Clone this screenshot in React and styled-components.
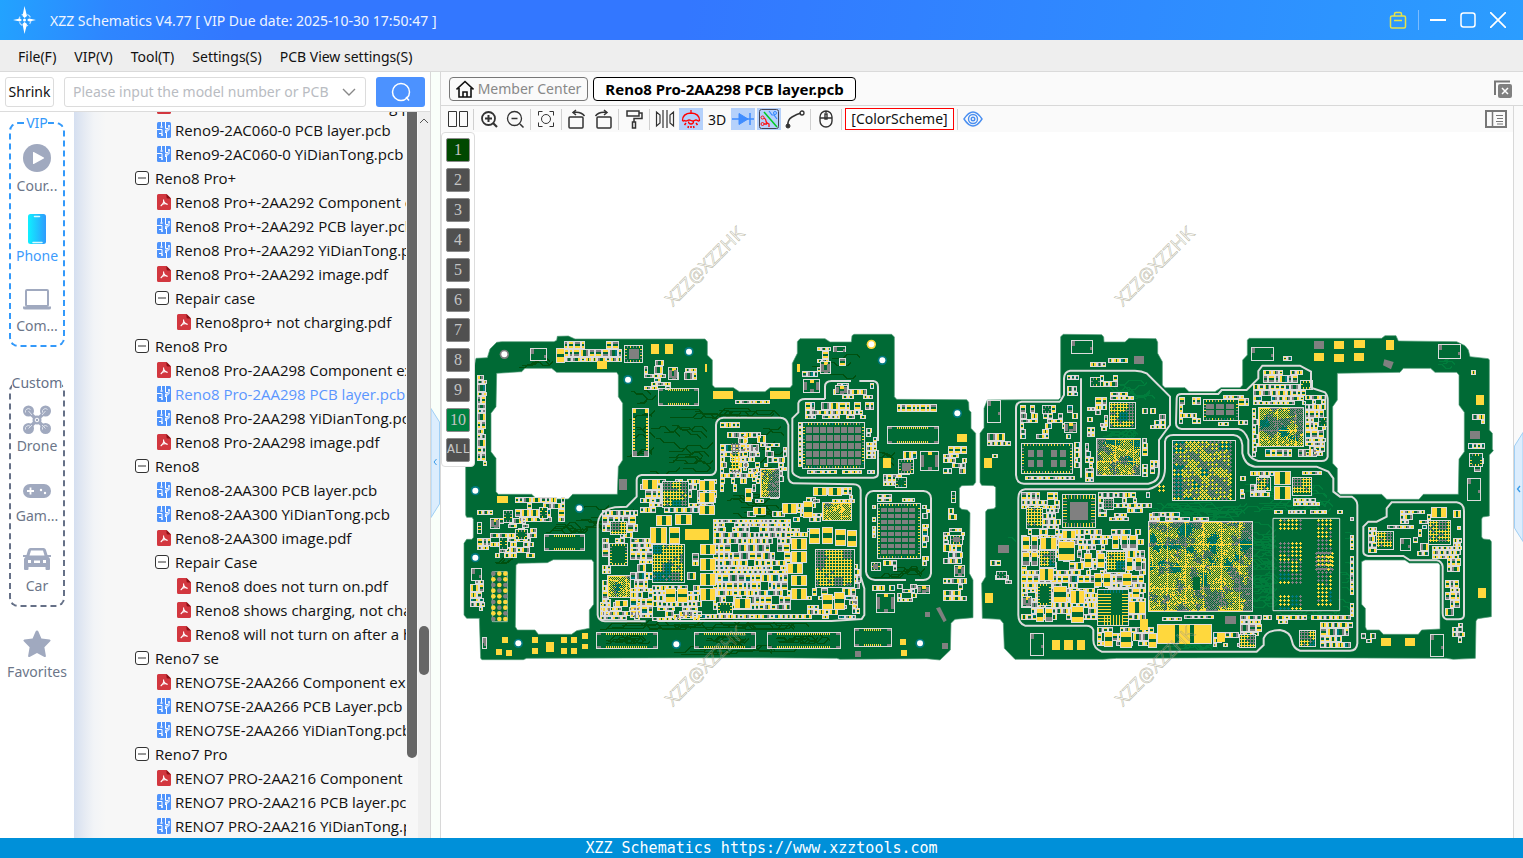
import React from 'react';
import styled, { createGlobalStyle } from 'styled-components';

const GlobalStyle = createGlobalStyle`
  * {
    box-sizing: border-box;
  }
  html, body, #root {
    height: 100%;
    margin: 0;
  }
  body {
    overflow: hidden;
    font-family: 'Noto Sans', 'Open Sans', 'Liberation Sans', sans-serif;
    font-size: 14px;
    color: #111;
  }
  button, input {
    font: inherit;
    color: inherit;
  }
`;

const AppWindow = styled.div`
  display: flex;
  flex-direction: column;
  height: 100vh;
  background: #fff;
`;

/* ---------- title bar and menu ---------- */

const TitleBar = styled.header`
  display: flex;
  align-items: center;
  height: 40px;
  flex: none;
  padding: 0 10px 0 12px;
  color: #eef4ff;
  background: linear-gradient(100deg, #22a3ff 0, #2e86ff 110px, #3377ff 240px, #3377ff 45%, #2f8bff 75%, #2b9dff 100%);
`;

const AppTitle = styled.h1`
  flex: 1;
  margin: 0 0 0 12px;
  font-size: 14px;
  font-weight: 400;
`;

const WindowButton = styled.button`
  display: grid;
  place-items: center;
  width: 30px;
  height: 30px;
  padding: 0;
  border: 0;
  background: none;
`;

const TitleDivider = styled.span`
  width: 1px;
  height: 20px;
  margin: 0 4px 0 5px;
  background: #7cbcff;
`;

const MenuBar = styled.nav`
  display: flex;
  align-items: center;
  flex: none;
  gap: 18px;
  height: 32px;
  padding: 2px 18px 0;
  background: #eee;
  border-bottom: 1px solid #dadada;
`;

const MenuButton = styled.button`
  padding: 0;
  border: 0;
  background: none;
  white-space: nowrap;
`;

/* ---------- left panel ---------- */

const Main = styled.main`
  display: flex;
  flex: 1;
  min-height: 0;
`;

const LeftPanel = styled.section`
  display: flex;
  flex-direction: column;
  flex: 0 0 431px;
  min-width: 0;
  border-right: 1px solid #d8d8d8;
`;

const SearchRow = styled.form`
  display: flex;
  align-items: center;
  flex: none;
  gap: 10px;
  height: 40px;
  padding: 0 5px;
  border-bottom: 1px solid #dcdcdc;
`;

const ShrinkButton = styled.button`
  width: 49px;
  height: 30px;
  padding: 0;
  border: 1px solid #dcdcdc;
  border-radius: 3px;
  background: #fff;
`;

const SearchBox = styled.label`
  display: flex;
  align-items: center;
  flex: 1;
  height: 30px;
  padding: 0 9px 0 8px;
  border: 1px solid #dcdcdc;
  border-radius: 3px;
  min-width: 0;
`;

const SearchInput = styled.input`
  flex: 1;
  min-width: 0;
  margin-right: 6px;
  padding: 0;
  border: 0;
  outline: 0;
  background: none;
  &::placeholder {
    color: #b9bcc2;
    opacity: 1;
  }
`;

const SearchButton = styled.button`
  display: grid;
  place-items: center;
  width: 49px;
  height: 30px;
  border: 0;
  border-radius: 3px;
  background: #4c92ff;
`;

const Browser = styled.div`
  display: flex;
  flex: 1;
  min-height: 0;
`;

const SideNav = styled.nav`
  flex: 0 0 74px;
  overflow: hidden;
`;

const NavGroup = styled.fieldset`
  min-width: 0;
  width: 56px;
  margin: 0 9px ${(props) => props.$gap}px;
  padding: 0 0 1px;
  border: 2px dashed ${(props) => props.$color};
  border-radius: 9px;
  legend {
    margin: 0 auto;
    padding: 0;
    line-height: 22px;
    color: ${(props) => props.$color};
  }
`;

const NavButton = styled.button`
  display: flex;
  flex-direction: column;
  align-items: center;
  gap: 4px;
  width: 100%;
  height: 70px;
  padding: 10px 0 0;
  border: 0;
  background: none;
  line-height: 20px;
  white-space: nowrap;
  color: ${(props) => (props.$active ? '#3d9bfc' : '#6c7689')};
`;

const Tree = styled.ul`
  flex: 1;
  min-width: 0;
  margin: 0;
  padding: 0 1px 0 61px;
  overflow: hidden;
  list-style: none;
  font-family: 'Open Sans', 'Noto Sans', sans-serif;
  font-size: 15px;
  background: linear-gradient(90deg, #d5dff0 0, #e6ebf3 11px, #f2f4f7 20px, #f7f7f7 32px);
  li:first-child {
    margin-top: -18px;
  }
`;

const TreeRow = styled.li`
  display: flex;
  align-items: center;
  gap: ${(props) => (props.$folder ? 6 : 4)}px;
  height: 24px;
  padding-left: ${(props) => props.$indent}px;
  white-space: nowrap;
  overflow: hidden;
  color: ${(props) => (props.$active ? '#5b96ff' : '#111')};
  svg {
    flex: none;
  }
`;

const ThumbTrack = styled.div`
  flex: 0 0 11px;
  background: #f7f7f7;
  div {
    width: 10px;
    height: 89%;
    border-radius: 0 0 5px 5px;
    background: #666;
  }
`;

const ScrollTrack = styled.div`
  flex: 0 0 12px;
  display: flex;
  flex-direction: column;
  align-items: center;
  background: #efefef;
  svg {
    flex: none;
    margin-top: 5px;
  }
  div {
    width: 10px;
    height: 49px;
    margin-top: auto;
    margin-bottom: 163px;
    border-radius: 5px;
    background: #666;
  }
`;

const Gutter = styled.div`
  display: flex;
  align-items: center;
  flex: none;
  width: 10px;
  background: ${(props) => props.$tint};
  border-${(props) => props.$side}: 1px solid #d8d8d8;
  button {
    display: block;
    width: 9px;
    height: 110px;
    margin-top: ${(props) => props.$shift}px;
    padding: 0;
    border: 0;
    background: none;
  }
  svg {
    display: block;
  }
`;

/* ---------- right panel ---------- */

const Workspace = styled.section`
  display: flex;
  flex-direction: column;
  flex: 1;
  min-width: 0;
`;

const TabRow = styled.div`
  display: flex;
  align-items: center;
  flex: none;
  gap: 5px;
  height: 34px;
  padding: 0 9px 0 8px;
  background: #fafafa;
  border-bottom: 1px solid #d8d8d8;
`;

const Tab = styled.button`
  display: flex;
  align-items: center;
  justify-content: center;
  gap: 4px;
  width: ${(props) => (props.$active ? 263 : 139)}px;
  height: 24px;
  padding: 0;
  border: 1px solid ${(props) => (props.$active ? '#000' : '#777')};
  border-radius: 4px;
  background: ${(props) => (props.$active ? '#fff' : '#fafafa')};
  color: ${(props) => (props.$active ? '#000' : '#888')};
  font-size: ${(props) => (props.$active ? 15 : 14)}px;
  font-weight: ${(props) => (props.$active ? 700 : 400)};
  line-height: 20px;
  white-space: nowrap;
`;

const CloseAll = styled.button`
  margin-left: auto;
  padding: 0;
  border: 0;
  background: none;
  line-height: 0;
`;

const ViewRow = styled.div`
  display: flex;
  flex: 1;
  min-height: 0;
`;

const ViewColumn = styled.div`
  display: flex;
  flex-direction: column;
  flex: 1;
  min-width: 0;
`;

const ToolBar = styled.div`
  display: flex;
  align-items: center;
  flex: none;
  height: 26px;
  padding: 0 6px 0 4px;
  background: #fafafa;
`;

const ToolButton = styled.button`
  display: grid;
  place-items: center;
  width: 24px;
  height: 22px;
  margin: 0 1px;
  padding: 0;
  border: 0;
  background: ${(props) => (props.$on ? '#b5d1fb' : 'none')};
`;

const ToolDivider = styled.span`
  width: 1px;
  height: 21px;
  margin: 0 2px;
  background: #d0d0d0;
`;

const SchemeButton = styled.button`
  width: 109px;
  height: 22px;
  margin: 0 1px;
  padding: 0;
  border: 1px solid #f00;
  background: #fff;
  line-height: 20px;
`;

const RightTool = styled.span`
  margin-left: auto;
  line-height: 0;
`;

const Canvas = styled.div`
  position: relative;
  flex: 1;
  min-height: 0;
  background: #fff;
`;

const BoardSvg = styled.svg`
  display: block;
  width: 100%;
  height: 100%;
  text {
    font-family: 'Open Sans', sans-serif;
    font-size: 18px;
  }
`;

const LayerPanel = styled.div`
  position: absolute;
  top: 0;
  left: 0;
  display: flex;
  flex-direction: column;
  gap: 6px;
  padding: 5px 4px 4px;
  border: 1px solid #ddd;
  border-radius: 4px;
  background: #fff;
`;

const LayerButton = styled.button`
  width: 24px;
  height: 24px;
  padding: 0;
  border: 1px solid #8a8a8a;
  border-radius: 2px;
  background: ${(props) => props.$fill};
  color: #c4c4c4;
  font-family: ${(props) => (props.$wide ? "'Liberation Mono', monospace" : "'Liberation Serif', serif")};
  font-size: ${(props) => (props.$wide ? 13 : 16)}px;
  line-height: 20px;
  text-align: center;
`;

const Footer = styled.footer`
  flex: none;
  height: 20px;
  background: #0090d9;
  color: #fff;
  font-family: 'DejaVu Sans Mono', monospace;
  font-size: 15px;
  line-height: 20px;
  text-align: center;
`;

/* ---------- icons ---------- */

const LogoIcon = () => (
  <svg width="26" height="30" viewBox="0 0 26 30">
    <circle cx="13" cy="15" r="6" fill="none" stroke="#bfe0ff" strokeWidth="1.2" strokeDasharray="4 2" />
    <path d="M12.500 1 15 11l-2.500 2-2-2zM12.500 29l-2-10 2-2 2.500 2zM1 15l7-1.500 2 1.500-2 1.500zM24 15l-7-1.500-2 1.500 2 1.500z" fill="#fff" />
    <circle cx="12.500" cy="15" r="1.500" fill="#fff" />
  </svg>
);

const FileIcon = ({ pdf }) =>
  pdf ? (
    <svg width="14" height="16" viewBox="0 0 14 16">
      <path d="M1.500 0H9.500L14 4.500V14.500A1.500 1.500 0 0 1 12.500 16H1.500A1.500 1.500 0 0 1 0 14.500V1.500A1.500 1.500 0 0 1 1.500 0Z" fill="#d2373f" />
      <path d="M9.500 0 14 4.500H11A1.500 1.500 0 0 1 9.500 3Z" fill="#8d1117" />
      <path d="M6.500 5.500c.8 2-.6 5-2.800 6.500M6.800 7.500c.8 1.800 2.200 2.800 4 2.800M4.500 10.800c1.500-1 3.500-1.200 5.500-.8" fill="none" stroke="#fff" strokeWidth="1.100" />
    </svg>
  ) : (
    <svg width="14" height="16" viewBox="0 0 14 16">
      <rect width="14" height="16" rx="1.500" fill="#4f93fb" />
      <path d="M4.500 0v4.500M8.500 0v6.500h2.500M0 7.500h5v5M9.500 16v-6.500M2 11.500h3M12 5v3H8.500v3" fill="none" stroke="#fff" />
      <path d="M3.500 4h2v2h-2zM11 3h2v2h-2zM4 12h2v2H4zM8.500 8h2v2h-2z" fill="#dbe9ff" />
    </svg>
  );

const FoldIcon = () => (
  <svg width="14" height="14" viewBox="0 0 14 14" fill="none" stroke="#333">
    <rect x=".5" y=".5" width="13" height="13" rx="2.500" fill="#fff" />
    <path d="M3 7h8" />
  </svg>
);

const navIcons = {
  course: (
    <>
      <circle cx="14" cy="14" r="14" fill="#a0a9bf" />
      <path d="M10 8.500v11q0 .8.800.4l10-5.300q.8-.6 0-1.200l-10-5.300q-.8-.4-.8.400z" fill="#fff" />
    </>
  ),
  phone: (
    <>
      <defs>
        <linearGradient id="phoneFill">
          <stop offset="0" stopColor="#0ff0ff" />
          <stop offset="1" stopColor="#2f9bfd" />
        </linearGradient>
      </defs>
      <rect x="5" width="18" height="30" rx="2.500" fill="url(#phoneFill)" />
      <path d="M11.500 2.500h5M10 28.500h9" stroke="#d8fbff" strokeWidth="1.500" strokeLinecap="round" />
    </>
  ),
  computer: (
    <>
      <rect x="3" y="6" width="22" height="16" rx="1" fill="none" stroke="#a0a9bf" strokeWidth="2" />
      <path d="M0 22.500h28V24q0 1.500-2 1.500H2q-2 0-2-1.500z" fill="#a0a9bf" />
    </>
  ),
  drone: (
    <>
      <path d="M5 7 23 25M23 7 5 25" stroke="#a0a9bf" strokeWidth="3.500" />
      <circle cx="5.500" cy="7" r="5.500" fill="#a0a9bf" />
      <circle cx="22.500" cy="7" r="5.500" fill="#a0a9bf" />
      <circle cx="5.500" cy="24.500" r="5.500" fill="#a0a9bf" />
      <circle cx="22.500" cy="24.500" r="5.500" fill="#a0a9bf" />
      <circle cx="14" cy="16" r="4.500" fill="#a0a9bf" />
      <circle cx="14" cy="16" r="1.800" fill="none" stroke="#fff" />
      <g fill="none" stroke="#dfe3ec">
        <path d="M2.500 8.500a3 3 0 0 1 5-3M19.500 8.500a3 3 0 0 1 5-3M2.500 25.500a3 3 0 0 1 5-3M19.500 25.500a3 3 0 0 1 5-3" />
        <path d="M5.500 7 9 11M22.500 7 19 11M5.500 24.500 9 21M22.500 24.500 19 21" />
      </g>
    </>
  ),
  game: (
    <>
      <rect y="10" width="28" height="14" rx="7" fill="#a0a9bf" />
      <path d="M7.500 13.500v7M4 17h7" stroke="#fff" strokeWidth="1.800" />
      <circle cx="18" cy="16" r="1.200" fill="#fff" />
      <circle cx="22" cy="19" r="1.200" fill="#fff" />
    </>
  ),
  car: (
    <path
      transform="translate(0 1)"
      fillRule="evenodd"
      fill="#a0a9bf"
      d="M7.500 3h13q1.800 0 2.400 1.700L24.500 10H28v2h-2.500q1.500.8 1.500 2.500V24q0 1-1 1h-2.500q-1 0-1-1v-2h-17v2q0 1-1 1H2q-1 0-1-1v-9.500Q1 12.800 2.500 12H0v-2h3.500l1.600-5.300Q5.700 3 7.500 3zM8 5.500l-1.500 5h15L20 5.500zM5 15v3h3v-3zM20 15v3h3v-3zM11 15.500v2.500h6v-2.500z"
    />
  ),
  star: (
    <path
      d="M14 .5q1 0 1.400 1l3 7 8.200 1q1.800.4.600 1.800l-5.800 6 1.500 8.600q.1 1.600-1.500 1L14 23l-7.400 3.900q-1.600.6-1.500-1l1.500-8.600-5.800-6q-1.200-1.400.6-1.800l8.200-1 3-7Q13 .5 14 .5z"
      fill="#a0a9bf"
    />
  ),
};

const NavIcon = ({ name }) => (
  <svg width="28" height="28" viewBox="0 0 28 28" overflow="visible">
    {navIcons[name]}
  </svg>
);

// every tool glyph is drawn in a 20 x 20 box
const toolIcons = {
  split: <path d="M.5 2.500h8v15h-8zM11.500 2.500h8v15h-8z" />,
  zoomIn: (
    <>
      <circle cx="9.500" cy="9.500" r="6.500" strokeWidth="1.800" />
      <path d="M6 9.500h7M9.500 6v7" strokeWidth="2" />
      <path d="m14 14 4 4" strokeWidth="2.200" />
    </>
  ),
  zoomOut: (
    <>
      <circle cx="9.500" cy="9.500" r="7" strokeWidth="1.300" />
      <path d="M6.500 9.500h6M15 15l3.500 3.500" strokeWidth="1.500" />
    </>
  ),
  fit: (
    <>
      <circle cx="10" cy="10" r="4.500" />
      <path d="M2.500 6.500v-4h4M13.500 2.500h4v4M17.500 13.500v4h-4M6.500 17.500h-4v-4" />
    </>
  ),
  rotateLeft: (
    <>
      <rect x="2" y="8" width="14" height="11" rx="1" strokeWidth="1.500" />
      <path d="M6 3.500q8-1.500 11.500 3.500M9 1 6 3.500l3 2.500" strokeWidth="1.500" />
    </>
  ),
  rotateRight: (
    <>
      <rect x="4" y="8" width="14" height="11" rx="1" strokeWidth="1.500" />
      <path d="M14 3.500Q6 2 2.500 7M11 1l3 2.500L11 6" strokeWidth="1.500" />
    </>
  ),
  roller: <path d="M3 2h12v5H3zM15 4h3v5.500h-8V13M8.500 13h3v6h-3z" strokeWidth="1.500" />,
  mirror: <path d="M8 1v18M12 1v18M1.500 3v14l3.500-3V6zM18.500 3v14l-3.500-3V6z" strokeWidth="1.200" />,
  lamp: (
    <g stroke="#f00" strokeWidth="1.300">
      <path d="M1.500 11.500q0-7 8.500-7.500 8.500.5 8.500 7.500-1 1-2 0-1.500-1-3 0t-3.500 0-3.500 0-3 0q-1 1-2 0zM10 4V1M7.500 12.500q0 2.500 2.500 2.500t2.500-2.500" />
      <path d="m5 14-1.500 2M15 14l1.500 2M7.500 17l-.5 2M12.500 17l.5 2M10 17v2" strokeWidth="1.500" />
    </g>
  ),
  diode: (
    <g stroke="#3f8cff" fill="#3f8cff">
      <path d="M-1 10h22M17 4v12" strokeWidth="1.500" />
      <path d="m6 4.500 9 5.500-9 5.500z" />
    </g>
  ),
  route: (
    <>
      <rect x=".5" y=".5" width="19" height="19" rx="2" stroke="#445" />
      <path d="m5 3 13 15" stroke="#0c2" strokeWidth="1.500" />
      <path d="m10 2 3 4h2l3 4" stroke="#38f" strokeWidth="1.200" />
      <circle cx="16" cy="4" r="1.500" stroke="#38f" />
      <path d="M5 9q2 1 2 3t3 3v3M5 15h3" stroke="#f11" strokeWidth="1.300" />
      <circle cx="3.500" cy="8.500" r="1.500" stroke="#f11" />
      <circle cx="3.500" cy="15" r="1.500" stroke="#f11" />
    </>
  ),
  arc: (
    <>
      <path d="M3 17q-1-6 4-9t9-4" strokeWidth="1.500" />
      <circle cx="17" cy="4" r="2" strokeWidth="1.300" />
      <circle cx="3" cy="17" r="2" fill="#333" />
    </>
  ),
  mouse: <path d="M4 8a6 6 0 0 1 12 0v4a6 6 0 0 1-12 0zM4 9h12M10 2.500v1.500M9 5h2v5H9z" strokeWidth="1.400" />,
  eye: (
    <g stroke="#4a8ff0" strokeWidth="1.400">
      <path d="M1 10q9-14 18 0-9 14-18 0z" />
      <circle cx="10" cy="10" r="4.500" />
      <circle cx="10" cy="10" r="1.800" />
    </g>
  ),
};

const ToolIcon = ({ name }) => (
  <svg width="20" height="20" viewBox="0 0 20 20" fill="none" stroke="#333" overflow="visible">
    {toolIcons[name]}
  </svg>
);

/* ---------- board drawing ---------- */

const C = {
  board: '#006a35',
  pad: '#ffd83d',
  gray: '#808080',
  silk: '#dcdcdc',
  teal: '#007a80',
};

const makeRandom = (seed) => {
  let a = seed;
  return () => {
    a = (a + 0x6d2b79f5) | 0;
    let t = Math.imul(a ^ (a >>> 15), 1 | a);
    t = (t + Math.imul(t ^ (t >>> 7), 61 | t)) ^ t;
    return ((t ^ (t >>> 14)) >>> 0) / 4294967296;
  };
};

const snap = (v) => Math.round(v / 3) * 3;
const box = (x, y, w, h) => `M${x} ${y}h${w}v${h}h${-w}z`;
const frame = (x, y, w, h) => `M${x} ${y}h${w}v${h}h${-w}zM${x + 3} ${y + 3}v${h - 6}h${w - 6}v${6 - h}z`;
const emptyLayer = () => ({ board: '', pad: '', gray: '', silk: '', teal: '' });

// collects the path data of one board: traces, then small parts, then everything that covers them
const buildLayers = ({ seed, fields, coils, grids, dense, matrix, connectors, chips, traces }) => {
  const rnd = makeRandom(seed);
  const parts = emptyLayer();
  const covers = emptyLayer();
  const cells = [];
  let trace = '';
  let out = parts;
  const tone = () => {
    const r = rnd();
    if (r < 0.62) return 'pad';
    return r < 0.96 ? 'gray' : 'teal';
  };

  traces.forEach(([x, y, w, h, n]) => {
    for (let i = 0; i < n; i += 1) {
      let px = snap(x + rnd() * w * 0.6);
      let py = snap(y + rnd() * h);
      trace += `M${px} ${py + 1.5}`;
      for (let k = 0; k < 3; k += 1) {
        const d = snap(6 + rnd() * 12);
        const run = snap(9 + (rnd() * w) / 6);
        const down = py + d < y + h && (rnd() < 0.5 || py - d < y);
        if (px + run + d > x + w) break;
        px += run + d;
        py += down ? d : -d;
        trace += `h${run}l${d} ${down ? d : -d}`;
      }
    }
  });

  fields.forEach(([x, y, w, h, density = 0.85]) => {
    let py = snap(y);
    while (py < y + h - 8) {
      const rowH = Math.min([12, 15, 18, 24][Math.floor(rnd() * 4)], Math.max(12, snap(y + h - py)));
      let px = snap(x);
      while (px < x + w - 8) {
        const pw = Math.min([12, 15, 18, 21, 27][Math.floor(rnd() * 5)], Math.max(12, snap(x + w - px)));
        if (rnd() < density) {
          out.board += box(px, py, pw, rowH);
          out.silk += frame(px, py, pw, rowH);
          if (pw >= rowH) {
            const p = pw > 18 ? 6 : 3;
            out[tone()] += box(px + 3, py + 3, p, rowH - 6);
            out[tone()] += box(px + pw - 3 - p, py + 3, p, rowH - 6);
          } else {
            const p = rowH > 18 ? 6 : 3;
            out[tone()] += box(px + 3, py + 3, pw - 6, p);
            out[tone()] += box(px + 3, py + rowH - 3 - p, pw - 6, p);
          }
        }
        px += pw;
      }
      py += rowH;
    }
  });

  out = covers;

  coils.forEach(([x0, y0, w0, h0]) => {
    const [x, y, w, h] = [x0, y0, w0, h0].map(snap);
    out.board += box(x, y, w, h);
    out.silk += frame(x, y, w, h);
    if (w >= h) {
      const p = snap((w - 6) * 0.36);
      out.pad += box(x + 3, y + 3, p, h - 6) + box(x + w - 3 - p, y + 3, p, h - 6);
    } else {
      const p = snap((h - 6) * 0.36);
      const last = w < 27 && rnd() < 0.4 ? 'gray' : 'pad';
      out.pad += box(x + 3, y + 3, w - 6, p);
      out[last] += box(x + 3, y + h - 3 - p, w - 6, p);
    }
  });

  // ball grids made of touching plus signs
  grids.forEach(([x0, y0, w0, h0, pitch = 9, edge = true, grayShare = 0.2]) => {
    const [x, y, w, h] = [x0, y0, w0, h0].map(snap);
    if (edge) {
      out.board += box(x - 3, y - 3, w + 6, h + 6);
      out.silk += frame(x - 3, y - 3, w + 6, h + 6);
    }
    const blocks = Array.from({ length: 64 }, () => {
      const r = rnd();
      if (r < grayShare) return 'gray';
      return r < grayShare + 0.1 ? 'teal' : 'pad';
    });
    for (let gy = y; gy + 9 <= y + h; gy += pitch) {
      for (let gx = x; gx + 9 <= x + w; gx += pitch) {
        const b = (Math.floor((gx - x) / 27) * 3 + Math.floor((gy - y) / 27) * 7) % 64;
        const key = rnd() < 0.12 ? 'gray' : blocks[b];
        out[key] += box(gx + 3, gy, 3, 9) + box(gx, gy + 3, 9, 3);
      }
    }
  });

  dense.forEach(([x0, y0, w0, h0]) => {
    const [x, y, w, h] = [x0, y0, w0, h0].map(snap);
    out.board += box(x - 3, y - 3, w + 6, h + 6);
    out.silk += frame(x - 3, y - 3, w + 6, h + 6);
    const seeds = Array.from({ length: Math.ceil((w * h) / 450) }, () => {
      const r = rnd();
      let key = 'pad';
      if (r < 0.27) key = 'gray';
      else if (r < 0.38) key = 'teal';
      return [rnd() * w, rnd() * h, key];
    });
    for (let gy = 0; gy < h; gy += 3) {
      for (let gx = 0; gx < w; gx += 3) {
        const lane = gx % 54 === 0 || gy % 66 === 0;
        if ((gx + gy) % 6 === 0 || lane || rnd() < 0.14) {
          let best = 1e9;
          let key = 'pad';
          const jx = gx + rnd() * 12;
          const jy = gy + rnd() * 12;
          seeds.forEach(([sx, sy, k]) => {
            const d = Math.abs(sx - jx) + Math.abs(sy - jy);
            if (d < best) {
              best = d;
              key = k;
            }
          });
          if (lane && key === 'teal') key = 'pad';
          cells.push([x + gx, y + gy, key]);
        }
      }
    }
  });

  matrix.forEach(({ x, y, w, h, cols, rows, cw, ch, px, py, dx, dy }) => {
    out.board += box(x, y, w, h);
    out.silk += frame(x, y, w, h);
    for (let i = x + 9; i < x + w - 9; i += 9) {
      out[tone()] += box(i, y + 3, 3, 6);
      out[tone()] += box(i, y + h - 9, 3, 6);
    }
    for (let j = y + 15; j < y + h - 12; j += 9) {
      out[tone()] += box(x + 3, j, 6, 3);
      out[tone()] += box(x + w - 9, j, 6, 3);
    }
    for (let r = 0; r < rows; r += 1) {
      for (let c = 0; c < cols; c += 1) {
        out.gray += box(px + c * dx, py + r * dy, cw, ch);
      }
    }
  });

  connectors.forEach(([x0, y0, w0, h0]) => {
    const [x, y, w, h] = [x0, y0, w0, h0].map(snap);
    out.silk += frame(x, y, w, h);
    if (w > h) {
      out.gray += box(x + 3, y + 3, 12, 6) + box(x + w - 15, y + 3, 12, 6);
      out.gray += box(x + 3, y + h - 9, 12, 6) + box(x + w - 15, y + h - 9, 12, 6);
      for (let i = x + 30; i < x + w - 30; i += 6) {
        out.pad += box(i, y + 3, 3, 6) + box(i, y + h - 9, 3, 6);
      }
    } else {
      out.pad += box(x + 3, y + 3, 9, 12) + box(x + w - 12, y + 3, 9, 12);
      out.gray += box(x + 3, y + h - 18, 12, 15) + box(x + w - 15, y + h - 18, 12, 15);
      for (let j = y + 30; j < y + h - 24; j += 9) {
        out.pad += box(x + 3, j, 6, 6) + box(x + w - 9, j, 6, 6);
      }
    }
  });

  chips.forEach(([x0, y0, w0, h0, core]) => {
    const [x, y, w, h] = [x0, y0, w0, h0].map(snap);
    out.board += box(x, y, w, h);
    out.silk += frame(x, y, w, h);
    if (core === 'pins' || core === 'core') {
      const len = w > 90 ? 12 : 6;
      for (let i = x + 9; i < x + w - 9; i += 9) {
        out[tone()] += box(i, y + 3, 3, len) + box(i, y + h - 3 - len, 3, len);
      }
      for (let j = y + 12; j < y + h - 9; j += 9) {
        out[tone()] += box(x + 3, j, len, 3) + box(x + w - 3 - len, j, len, 3);
      }
    }
    if (core === 'core') {
      out.gray += box(x + snap(w * 0.24), y + snap(h * 0.24), snap(w * 0.54), snap(h * 0.54));
    }
    if (core === 'corners') {
      out.gray += box(x + 3, y + snap(h * 0.2), 9, snap(h * 0.6));
      out.gray += box(x + w - 12, y + snap(h * 0.2), 9, snap(h * 0.6));
      out.pad += box(x + snap(w * 0.4), y + 3, 12, 9);
      out.gray += box(x + snap(w * 0.4), y + h - 12, 12, 9);
    }
    if (core === 'tabs') {
      out.gray += box(x + 3, y + 3, 9, 15) + box(x + w - 9, y + snap(h * 0.5), 6, 9);
    }
    if (core === 'comb') {
      for (let j = y + 15; j < y + h - 12; j += 9) {
        out.pad += box(x + 3, j, 39, 3) + box(x + w - 21, j, 18, 3);
      }
      for (let i = x + 21; i < x + w - 15; i += 9) {
        out.pad += box(i, y + h - 33, 3, 30);
        out.teal += box(i, y + 3, 3, 9);
      }
    }
  });

  return { trace, parts, covers, cells };
};

const shift = (dx, list) => list.map(([x, ...rest]) => [x + dx, ...rest]);

const leftBoard = {
  id: 'leftBoard',
  outline:
    'M62 1000L58 880 20 880 12 870 12 655 20 643 36 643 40 637 40 583 36 577 20 577 17 570 17 420 27 380 27 200 48 100 82 98 90 72 110 52 125 50 282 50 290 46 292 34 325 33 345 42 735 42 742 50 742 90 757 105 757 180 765 188 820 188 838 200 915 200 930 188 990 188 997 180 997 115 1012 85 1012 50 1020 41 1095 41 1110 51 1174 51 1176 32 1182 28 1295 28 1303 36 1303 215 1310 223 1520 224 1526 232 1527 255 1533 262 1533 310 1547 325 1547 472 1540 481 1505 482 1498 490 1498 546 1505 553 1522 555 1530 563 1528 745 1539 765 1539 878 1505 881 1485 883 1473 895 1471 975 1440 1005 1400 1001 1140 1003 1130 1000 840 998 200 1000 190 1004 66 1004z',
  holes:
    'M110 145L185 140 195 130 275 130 290 142 470 142 475 150 475 215 488 235 488 405 475 425 472 508 338 508 325 522 230 522 215 508 115 508 108 500 108 400 93 380 93 265 108 245zM168 720L175 715 262 713 280 704 395 704 401 712 401 838 388 855 388 910 350 917 335 928 235 928 225 915 172 915 166 905z',
  shields:
    'M592 888H1115L1205 882 1213 870V790L1202 755V495Q1200 478 1180 478L1000 475Q985 470 985 455V300Q980 278 960 278H790Q769 280 768 300V435Q765 450 750 450H545Q530 452 530 465V515L500 545 465 547Q415 555 413 600V870Q415 888 435 889H557M1095 222V185Q1095 168 1115 168H1173M1198 168H1240Q1254 170 1254 185V348M1254 375V445Q1254 458 1240 458H1020Q998 450 997 440V280L1015 262V235Q1018 222 1035 222H1095M1338 765H1245Q1220 762 1218 740V520Q1220 500 1240 498H1390Q1412 500 1413 520V745Q1410 764 1390 765H1365',
  pads: [
    [573, 58, 24, 28], [615, 58, 24, 28], [411, 108, 30, 24], [111, 514, 33, 20], [127, 936, 17, 17], [108, 972, 17, 17],
    [138, 975, 17, 17], [216, 936, 18, 18], [216, 969, 18, 18], [258, 951, 24, 30], [303, 936, 18, 18], [303, 969, 18, 18],
    [333, 936, 18, 18], [333, 969, 18, 18], [366, 924, 18, 18], [366, 957, 18, 15], [759, 198, 60, 24], [930, 198, 60, 24],
    [676, 612, 70, 32], [1492, 328, 28, 22], [1270, 400, 22, 30], [1320, 942, 18, 18], [1323, 975, 18, 18], [736, 118, 6, 24], [1012, 118, 8, 24],
  ],
  grays: [[477, 462, 24, 32], [1395, 862, 15, 15], [1446, 953, 18, 18], [1185, 978, 18, 18]],
  vias: [[687, 80], [504, 164], [46, 497], [358, 550], [46, 698], [175, 955], [649, 958], [1267, 106], [1492, 265], [1380, 955], [133, 88, 'gray'], [1234, 58, 'pad']],
  bar: 'M1428 850l12-4 20 40-9 6z',
};

const rightBoard = {
  id: 'rightBoard',
  outline:
    'M120 1003L88 970 85 895 75 883 22 880 20 775 32 755 32 560 38 553 57 551 62 545 62 487 55 482 20 481 15 472 15 325 27 308 27 250 37 225 250 224 257 218 257 35 265 28 380 29 386 36 387 51 450 51 462 40 543 41 548 52 548 85 562 110 562 180 570 188 630 188 642 200 720 200 738 188 795 188 803 180 803 105 817 90 817 45 823 40 1220 40 1230 32 1263 32 1270 48 1445 50 1470 62 1480 75 1485 95 1540 101 1543 105 1543 315 1552 325 1552 372 1555 377 1543 390 1543 573 1523 576 1520 582 1520 636 1525 642 1545 644 1549 650 1549 875 1508 881 1503 888 1501 1000 1435 1003 1415 1000 845 998 425 1000 385 1003z',
  holes:
    'M1087 145L1275 142 1285 130 1367 130 1380 142 1445 142 1452 150 1452 240 1468 262 1468 380 1452 402 1450 508 1345 508 1332 523 1235 523 1220 508 1095 508 1087 500 1087 430 1073 415 1073 245 1087 225zM1160 710L1170 705 1290 705 1303 714 1390 714 1395 720 1395 912 1340 915 1330 928 1225 928 1213 915 1175 915 1171 905 1171 850 1160 838z',
  shields:
    'M255 230H140Q123 232 123 250V450Q125 478 150 476H520Q552 470 552 440V345L585 300V215L515 145Q500 137 480 137H285Q268 140 267 160V210L255 230M318 160V458M150 493H520Q570 480 570 430V350Q572 330 595 330H775Q800 332 802 360V385Q810 422 840 425H1025L1060 440 1075 460V500L1095 515H1130Q1147 525 1147 540V955Q1145 977 1125 977H975Q955 972 950 945 945 920 915 915 875 915 866 940V960L845 980H380Q355 970 355 945V915Q350 902 335 902H150Q130 895 130 870V520Q130 495 150 493M605 220Q605 207 620 207H730L740 195H815L850 160V138L862 122H975L1008 140V188L1050 202Q1058 210 1058 225V395Q1055 408 1040 408H850Q825 400 820 385V345Q810 315 790 312H620Q603 310 603 295ZM1250 532H1445Q1467 535 1467 560V870Q1467 883 1450 883H1415Q1403 880 1403 865V725Q1400 708 1385 706H1305L1285 693H1180Q1165 690 1165 680V605L1180 590H1205L1235 575V550z',
  pads: [
    [1077, 48, 30, 24], [1137, 46, 33, 24], [1017, 84, 30, 24], [1077, 87, 30, 24], [1137, 84, 30, 24], [1233, 45, 24, 30],
    [1503, 210, 24, 30], [1509, 789, 24, 30], [1218, 939, 30, 24], [1290, 939, 30, 24], [27, 400, 24, 30], [30, 804, 24, 30],
    [231, 945, 24, 30], [267, 945, 27, 30], [306, 945, 24, 30], [549, 900, 51, 54], [657, 900, 51, 54], [612, 900, 33, 57], [726, 924, 24, 27], [495, 882, 24, 33],
  ],
  grays: [[1017, 48, 30, 24], [1485, 318, 30, 24], [477, 93, 30, 24], [69, 660, 33, 24], [750, 873, 33, 24]],
  vias: [],
  bar: 'M1228 103l28 8-8 22-24-12z',
};

const leftLayers = buildLayers({
  seed: 41,
  traces: [
    [100, 115, 180, 12, 3], [500, 190, 90, 240, 14], [570, 300, 190, 150, 14], [600, 250, 380, 30, 8], [330, 540, 200, 80, 12],
    [410, 895, 700, 18, 14], [500, 975, 600, 12, 6], [250, 595, 150, 30, 6], [80, 710, 80, 12, 4], [780, 500, 200, 80, 10],
    [860, 290, 120, 180, 10], [1230, 720, 170, 40, 6], [1250, 360, 60, 80, 4], [1020, 70, 200, 90, 3], [430, 935, 150, 20, 8], [730, 935, 150, 20, 8], [940, 935, 180, 20, 8],
  ],
  fields: [
    [50, 150, 28, 280], [50, 108, 20, 16], [290, 48, 195, 65, 0.8], [552, 105, 80, 90, 0.6], [630, 130, 80, 40, 0.6],
    [165, 515, 150, 75, 0.6], [50, 555, 70, 20, 0.9], [90, 580, 140, 120, 0.5], [50, 640, 40, 40, 0.7], [30, 765, 42, 90, 0.7],
    [780, 290, 60, 20, 1], [780, 322, 120, 180, 0.68], [850, 330, 130, 170, 0.4], [540, 462, 230, 110, 0.75], [425, 555, 110, 100], [425, 655, 28, 225],
    [510, 640, 70, 240, 0.75], [575, 780, 150, 110, 0.8], [420, 830, 120, 55], [760, 582, 232, 280, 0.92], [860, 505, 125, 70, 0.4],
    [1000, 515, 85, 75, 0.7], [1060, 485, 130, 50, 0.6], [680, 660, 40, 110, 0.6], [1040, 790, 155, 90, 0.55], [1175, 700, 25, 180, 0.6],
    [640, 868, 420, 14, 0.95], [990, 610, 60, 30, 0.6], [1310, 238, 120, 24, 0.85], [1315, 378, 58, 70, 0.6], [1270, 448, 60, 35, 0.6],
    [1450, 362, 70, 84, 0.6], [1465, 550, 25, 40, 0.9], [1448, 610, 65, 110, 0.6], [1450, 760, 75, 72, 0.6], [1235, 780, 70, 18, 0.8],
    [1310, 778, 62, 50, 0.7], [1230, 704, 80, 45, 0.5], [1070, 65, 42, 78, 0.6], [1025, 138, 50, 20, 0.9], [1120, 175, 120, 45, 0.6], [1035, 232, 205, 50, 0.75],
    [1218, 310, 30, 135, 0.7], [1013, 290, 12, 140, 0.9], [1020, 435, 225, 12, 0.8], [1250, 508, 125, 22, 0.8], [1235, 540, 12, 130, 0.6],
    [1385, 540, 22, 185, 0.6], [825, 226, 110, 14, 0.8], [1120, 100, 80, 30, 0.5],
  ],
  coils: [
    [546, 462, 48, 34], [718, 465, 48, 33], [718, 502, 48, 33], [718, 540, 48, 30], [588, 570, 48, 32], [646, 568, 50, 32], [570, 605, 50, 50],
    [628, 605, 34, 50], [720, 658, 48, 33], [720, 698, 48, 40], [720, 744, 48, 40], [720, 790, 48, 38], [614, 790, 34, 46], [650, 790, 34, 46],
    [288, 70, 27, 45], [466, 824, 40, 22],
    ...shift(750, [
      [215, 533, 46, 34], [280, 528, 30, 50], [298, 610, 34, 48], [336, 605, 34, 50], [374, 612, 34, 50], [412, 615, 30, 50],
      [244, 640, 48, 36], [244, 678, 48, 36], [232, 714, 48, 34], [244, 750, 48, 34], [244, 788, 48, 36], [336, 808, 34, 48],
      [372, 800, 34, 54], [310, 486, 42, 26], [354, 486, 42, 26], [130, 545, 38, 25], [106, 488, 22, 42], [72, 820, 50, 32],
    ]),
  ],
  grids: [
    [610, 470, 74, 74], [453, 590, 46, 36], [580, 660, 92, 112], [812, 355, 30, 90, 9, false], [1068, 675, 113, 112, 9, true, 0.25],
  ],
  dense: [[445, 752, 66, 64], [902, 432, 54, 84], [1088, 535, 84, 50]],
  matrix: [
    { x: 1026, y: 291, w: 189, h: 141, cols: 8, rows: 5, cw: 18, ch: 18, px: 1038, py: 306, dx: 21, dy: 24 },
    { x: 1251, y: 534, w: 132, h: 168, cols: 5, rows: 8, cw: 18, ch: 12, px: 1263, py: 549, dx: 21, dy: 18 },
  ],
  connectors: [
    [595, 188, 122, 54], [253, 628, 123, 51], [408, 920, 186, 51], [703, 920, 186, 51], [922, 920, 222, 51], [1282, 302, 156, 54], [515, 250, 51, 148],
    [1183, 910, 114, 57],
  ],
  chips: [
    [492, 60, 58, 55, 'core'], [210, 68, 51, 38, 'tabs'], [448, 655, 57, 68, 'pins'], [1315, 402, 48, 45, 'core'], [1380, 378, 57, 60, 'corners'],
    [1248, 805, 58, 60, 'corners'], [1028, 163, 51, 42, 'corners'], [34, 728, 34, 38, 'tabs'], [90, 580, 30, 33, 'corners'], [118, 636, 28, 40, 'pins'],
    [130, 555, 30, 38, 'pins'], [165, 612, 40, 32, 'pins'], [236, 545, 27, 36, 'pins'], [1471, 630, 40, 30, 'core'], [1483, 720, 33, 36, 'corners'],
    [1081, 108, 34, 38, 'corners'], [1126, 180, 40, 30, 'corners'], [624, 126, 30, 38, 'corners'], [1232, 712, 30, 27, 'core'], [1305, 455, 36, 33, 'pins'],
    [50, 592, 15, 36, 'pins'], [1472, 498, 15, 36, 'pins'], [66, 935, 16, 36, 'tabs'], [772, 830, 48, 36, 'pins'], [1372, 780, 39, 28, 'corners'], [1120, 62, 39, 18, 'tabs'],
  ],
});

const rightLayers = buildLayers({
  seed: 97,
  traces: [
    [350, 165, 200, 60, 8], [520, 530, 300, 60, 24], [800, 470, 290, 90, 26], [800, 590, 110, 260, 50], [1085, 590, 50, 270, 10], [900, 860, 200, 20, 10],
    [1380, 90, 60, 40, 4], [90, 630, 40, 20, 2], [560, 960, 180, 14, 5], [380, 310, 120, 30, 8],
  ],
  fields: [
    [275, 150, 35, 60, 0.6], [337, 150, 95, 42, 0.55], [135, 240, 175, 105, 0.5], [360, 215, 36, 100, 0.7], [335, 245, 22, 90, 0.6], [500, 250, 20, 30, 0.4],
    [525, 250, 48, 80, 0.5], [525, 330, 22, 120], [405, 200, 75, 24, 0.6], [330, 340, 28, 130], [502, 340, 18, 120], [150, 452, 150, 14], [345, 110, 55, 18],
    [400, 98, 60, 16], [35, 325, 70, 80, 0.55], [45, 705, 70, 80, 0.5], [137, 502, 118, 48], [202, 550, 55, 62], [368, 502, 165, 85, 0.6], [137, 612, 375, 280, 0.8],
    [365, 905, 180, 66, 0.75], [627, 870, 120, 15, 0.9], [530, 562, 125, 24, 0.7], [560, 876, 60, 12], [655, 575, 48, 12, 0.8], [296, 350, 18, 85], [715, 922, 80, 45, 0.7],
    [612, 215, 68, 82, 0.7], [745, 210, 60, 12], [730, 290, 60, 12], [790, 220, 30, 90, 0.6],
    ...shift(795, [
      [70, 134, 118, 40, 0.8], [38, 178, 160, 68, 0.8], [35, 250, 18, 150], [60, 372, 190, 28], [195, 210, 62, 180], [0, 430, 18, 100, 0.6],
      [30, 437, 70, 80, 0.6], [70, 556, 240, 12, 0.7], [160, 520, 80, 25], [185, 438, 60, 18], [248, 470, 22, 55, 0.6], [330, 575, 12, 300, 0.7],
      [70, 870, 264, 22], [240, 890, 98, 78], [0, 870, 65, 60], [115, 885, 30, 20], [480, 555, 90, 42, 0.7], [385, 605, 25, 80], [440, 600, 80, 20],
      [520, 600, 48, 92, 0.6], [638, 555, 26, 110, 0.7], [575, 664, 90, 36], [620, 700, 42, 44], [615, 765, 45, 108, 0.6], [692, 135, 24, 20, 0.9],
      [697, 268, 38, 30, 0.9], [685, 355, 50, 20, 0.9], [676, 400, 55, 40, 0.5], [635, 895, 40, 60, 0.7], [362, 925, 45, 30, 0.5], [128, 94, 40, 18],
    ]),
  ],
  coils: [
    [140, 633, 24, 42], [168, 633, 22, 42], [195, 635, 50, 38], [250, 648, 51, 60], [140, 680, 24, 42], [168, 680, 22, 42], [193, 730, 46, 38],
    [235, 782, 42, 52], [285, 795, 46, 42], [288, 842, 38, 52], [358, 745, 24, 42], [385, 745, 24, 42], [440, 745, 30, 38], [327, 685, 24, 46],
    [365, 685, 24, 46], [452, 695, 22, 42], [480, 695, 22, 42], [412, 630, 22, 42], [438, 630, 22, 42], [463, 630, 24, 42], [435, 917, 36, 50],
    [387, 918, 26, 48], [260, 615, 42, 27], [470, 790, 24, 30], [182, 850, 24, 42], [210, 850, 24, 42], [460, 828, 55, 40], [520, 925, 26, 45],
    [897, 437, 51, 42], [897, 482, 51, 42], [1368, 545, 48, 33],
  ],
  grids: [
    [155, 548, 46, 60], [195, 678, 46, 48], [395, 680, 54, 60], [387, 523, 28, 30], [405, 235, 76, 76, 9, true, 0.5],
    [955, 460, 55, 50], [845, 460, 38, 35], [1363, 588, 62, 70, 9, true, 0.3], [1205, 622, 48, 52], [975, 918, 45, 46], [795, 930, 46, 35],
    [912, 583, 78, 40, 12, false], [912, 652, 78, 60, 12, false, 0.4], [912, 708, 78, 76, 12, false, 0.5], [912, 810, 78, 45, 12, false],
    [1026, 583, 50, 270, 12, false, 0.45], [1020, 680, 60, 60, 12, false, 0.3], [550, 480, 30, 30, 12, false, 0],
    [594, 348, 186, 177, 12, true, 0.35],
  ],
  dense: [[522, 592, 309, 267], [366, 342, 129, 108], [852, 250, 132, 114]],
  matrix: [
    { x: 138, y: 354, w: 156, h: 93, cols: 2, rows: 2, cw: 18, ch: 21, px: 159, py: 375, dx: 27, dy: 30 },
    { x: 684, y: 222, w: 108, h: 66, cols: 3, rows: 2, cw: 24, ch: 15, px: 693, py: 237, dx: 30, dy: 18 },
  ],
  connectors: [],
  chips: [
    [260, 508, 102, 102, 'core'], [186, 775, 45, 70, 'pins'], [365, 792, 95, 112, 'comb'], [1275, 640, 32, 38, 'tabs'], [1483, 383, 42, 42, 'pins'],
    [829, 67, 70, 42, 'tabs'], [1390, 58, 69, 45, 'tabs'], [1475, 458, 42, 69, 'tabs'], [1366, 928, 42, 69, 'tabs'], [287, 45, 66, 43, 'tabs'],
    [37, 225, 43, 70, 'tabs'], [166, 925, 43, 70, 'tabs'], [346, 155, 33, 30, 'pins'], [268, 290, 38, 32, 'corners'], [202, 240, 30, 26, 'pins'],
    [63, 738, 34, 24, 'pins'], [142, 812, 30, 32, 'corners'], [974, 166, 38, 30, 'pins'], [1028, 275, 30, 30, 'pins'], [546, 897, 165, 60],
  ],
});

// the second lattice of the large array sits between the plus signs of the first
for (let y = 354; y < 513; y += 12) {
  for (let x = 600; x < 768; x += 12) {
    const key = (x * 7 + y * 3) % 5 < 2 ? 'gray' : 'pad';
    rightLayers.covers[(x < 624 && y > 420) || (y < 378 && x > 720) ? 'teal' : key] += box(x + 3, y, 3, 9) + box(x, y + 3, 9, 3);
  }
}

const Layer = ({ paths }) => (
  <>
    <path d={paths.board} fill={C.board} />
    <path d={paths.silk} fill={C.silk} fillRule="nonzero" />
    <path d={paths.pad} fill={C.pad} />
    <path d={paths.gray} fill={C.gray} />
    <path d={paths.teal} fill={C.teal} />
  </>
);

const Board = ({ board, layers, trace, originX, children }) => (
  <g transform={`translate(${originX} 325) scale(${1 / 3})`}>
    <clipPath id={board.id}>
      <path d={board.outline + board.holes} clipRule="evenodd" />
    </clipPath>
    <path d={board.outline + board.holes} fillRule="evenodd" fill={C.board} stroke="#4f9a76" strokeWidth="2" />
    <g shapeRendering="crispEdges">
      <path d={layers.trace} fill="none" stroke={trace} strokeWidth="3" clipPath={`url(#${board.id})`} />
      <Layer paths={layers.parts} />
      <Layer paths={layers.covers} />
      {layers.cells.map(([x, y, key]) => (
        <rect key={`${x}-${y}`} x={x} y={y} width="3" height="3" fill={C[key]} />
      ))}
      {board.pads.map(([x, y, w, h]) => (
        <rect key={`${x}-${y}`} x={x} y={y} width={w} height={h} fill={C.pad} />
      ))}
      {board.grays.map(([x, y, w, h]) => (
        <rect key={`${x}-${y}`} x={x} y={y} width={w} height={h} fill={C.gray} />
      ))}
    </g>
    <path d={board.bar} fill={C.gray} />
    <path d={board.shields} fill="none" stroke={C.silk} strokeWidth="6" />
    {board.vias.map(([x, y, tone = 'teal']) => (
      <g key={`${x}-${y}`}>
        <circle cx={x} cy={y} r="14" fill={C[tone]} />
        <circle cx={x} cy={y} r="9" fill="#fff" />
      </g>
    ))}
    {children}
  </g>
);

// pin header in the lower left corner: three columns of round balls
const headerBalls = [];
for (let row = 0; row < 9; row += 1) {
  for (let col = 0; col < 3; col += 1) {
    headerBalls.push([100 + col * 18, 746 + row * 17, (row * 5 + col * 3) % 8 < 3 ? C.gray : C.pad]);
  }
}

const watermarks = [[673, 307], [1123, 307], [673, 707], [1123, 707]];

const BoardView = () => (
  <BoardSvg viewBox="441 132 1072 706" role="img" aria-label="PCB layer view">
    <Board board={leftBoard} layers={leftLayers} trace="#00500f" originX={460}>
      <path d="M97 740h45v150h-45z" fill="none" stroke={C.silk} strokeWidth="2" />
      {headerBalls.map(([x, y, fill]) => (
        <circle key={`${x}-${y}`} cx={x} cy={y} r="7" fill={fill} />
      ))}
    </Board>
    <Board board={rightBoard} layers={rightLayers} trace="#007d3c" originX={975}>
      <path d="M228 375h18v21h-18zM255 375h18v21h-18zM228 405h18v21h-18zM255 405h18v21h-18z" fill={C.gray} />
      <path d="M894 580h200v277H894z" fill="none" stroke={C.silk} strokeWidth="3" />
      <path d="M654 756h21v39h-21z" fill={C.board} />
    </Board>
    {watermarks.map(([x, y]) => (
      <text
        key={`${x}-${y}`}
        transform={`translate(${x} ${y}) rotate(-45)`}
        fill="none"
        stroke="#a39f88"
        strokeOpacity=".7"
        strokeWidth=".6"
      >
        XZZ@XZZHK
      </text>
    ))}
  </BoardSvg>
);

/* ---------- data ---------- */

const treeRows = [
  ['pdf', 1, 'Reno9-2AC060-0 Board drawing.pdf'],
  ['pcb', 1, 'Reno9-2AC060-0 PCB layer.pcb'],
  ['pcb', 1, 'Reno9-2AC060-0 YiDianTong.pcb'],
  ['dir', 0, 'Reno8 Pro+'],
  ['pdf', 1, 'Reno8 Pro+-2AA292 Component explorer.pdf'],
  ['pcb', 1, 'Reno8 Pro+-2AA292 PCB layer.pcb'],
  ['pcb', 1, 'Reno8 Pro+-2AA292 YiDianTong.pcb'],
  ['pdf', 1, 'Reno8 Pro+-2AA292 image.pdf'],
  ['dir', 1, 'Repair case'],
  ['pdf', 2, 'Reno8pro+ not charging.pdf'],
  ['dir', 0, 'Reno8 Pro'],
  ['pdf', 1, 'Reno8 Pro-2AA298 Component explorer.pdf'],
  ['pcb', 1, 'Reno8 Pro-2AA298 PCB layer.pcb', true],
  ['pcb', 1, 'Reno8 Pro-2AA298 YiDianTong.pcb'],
  ['pdf', 1, 'Reno8 Pro-2AA298 image.pdf'],
  ['dir', 0, 'Reno8'],
  ['pcb', 1, 'Reno8-2AA300 PCB layer.pcb'],
  ['pcb', 1, 'Reno8-2AA300 YiDianTong.pcb'],
  ['pdf', 1, 'Reno8-2AA300 image.pdf'],
  ['dir', 1, 'Repair Case'],
  ['pdf', 2, 'Reno8 does not turn on.pdf'],
  ['pdf', 2, 'Reno8 shows charging, not charging.pdf'],
  ['pdf', 2, 'Reno8 will not turn on after a hit.pdf'],
  ['dir', 0, 'Reno7 se'],
  ['pdf', 1, 'RENO7SE-2AA266 Component explorer.pdf'],
  ['pcb', 1, 'RENO7SE-2AA266 PCB Layer.pcb'],
  ['pcb', 1, 'RENO7SE-2AA266 YiDianTong.pcb'],
  ['dir', 0, 'Reno7 Pro'],
  ['pdf', 1, 'RENO7 PRO-2AA216 Component explorer.pdf'],
  ['pcb', 1, 'RENO7 PRO-2AA216 PCB layer.pcb'],
  ['pcb', 1, 'RENO7 PRO-2AA216 YiDianTong.pcb'],
];

const menus = ['File(F)', 'VIP(V)', 'Tool(T)', 'Settings(S)', 'PCB View settings(S)'];

const navGroups = [
  { title: 'VIP', color: '#3399fa', gap: 25, items: [['course', 'Cour...'], ['phone', 'Phone', true], ['computer', 'Com...']] },
  { title: 'Custom', color: '#657087', gap: 13, items: [['drone', 'Drone'], ['game', 'Gam...'], ['car', 'Car']] },
];

const tools = [
  'split', '|', 'zoomIn', 'zoomOut', '|', 'fit', '|', 'rotateLeft', 'rotateRight', '|', 'roller', '|',
  'mirror', 'lamp', '3D', 'diode', 'route', 'arc', '|', 'mouse', '|',
];
const activeTools = ['lamp', 'diode', 'route'];

const layerNames = ['1', '2', '3', '4', '5', '6', '7', '8', '9', '10', 'ALL'];
const layerFills = { 1: '#004800', 10: '#008040' };

/* ---------- page ---------- */

const Handle = ({ label }) => (
  <button type="button" aria-label={label}>
    <svg width="9" height="110" viewBox="0 0 9 110">
      <path d="M0 .5 8.500 14v82L0 109.500z" fill="#dcedfd" stroke="#9fcff5" />
      <path d="M5.500 51 3 54l2.500 3" fill="none" stroke="#3a9be8" />
    </svg>
  </button>
);

const RightHandle = ({ label }) => (
  <button type="button" aria-label={label}>
    <svg width="9" height="110" viewBox="0 0 9 110">
      <path d="M9 .5.5 14v82L9 109.500z" fill="#dcedfd" stroke="#9fcff5" />
      <path d="M6 54l-2.500 3L6 60" fill="none" stroke="#3a9be8" strokeWidth="1.300" />
    </svg>
  </button>
);

const App = () => (
  <AppWindow>
    <GlobalStyle />
    <TitleBar>
      <LogoIcon />
      <AppTitle>XZZ Schematics V4.77 [ VIP Due date: 2025-10-30 17:50:47 ]</AppTitle>
      <WindowButton type="button" aria-label="Toolbox">
        <svg width="18" height="18" viewBox="0 0 18 18" fill="none" stroke="#e6e34a" strokeWidth="1.500">
          <rect x="1.500" y="5" width="15" height="12" rx="1.500" />
          <path d="M5.500 5V3q0-1.500 1.500-1.500h4q1.500 0 1.500 1.500v2M5 9.500h8" />
        </svg>
      </WindowButton>
      <TitleDivider />
      <WindowButton type="button" aria-label="Minimize">
        <svg width="16" height="16" viewBox="0 0 16 16" stroke="#fff" strokeWidth="2">
          <path d="M0 8h16" />
        </svg>
      </WindowButton>
      <WindowButton type="button" aria-label="Maximize">
        <svg width="16" height="16" viewBox="0 0 16 16" fill="none" stroke="#fff" strokeWidth="1.500">
          <rect x="1" y="1" width="14" height="14" rx="2.500" />
        </svg>
      </WindowButton>
      <WindowButton type="button" aria-label="Close">
        <svg width="16" height="16" viewBox="0 0 16 16" stroke="#fff" strokeWidth="1.700">
          <path d="m0 0 16 16M16 0 0 16" />
        </svg>
      </WindowButton>
    </TitleBar>
    <MenuBar>
      {menus.map((menu) => (
        <MenuButton type="button" key={menu}>{menu}</MenuButton>
      ))}
    </MenuBar>
    <Main>
      <LeftPanel>
        <SearchRow>
          <ShrinkButton type="button">Shrink</ShrinkButton>
          <SearchBox>
            <SearchInput aria-label="Model number" placeholder="Please input the model number or PCB" />
            <svg width="14" height="8" viewBox="0 0 14 8" fill="none" stroke="#888" strokeWidth="1.400">
              <path d="m1 1 6 6 6-6" />
            </svg>
          </SearchBox>
          <SearchButton type="submit" aria-label="Search">
            <svg width="20" height="20" viewBox="0 0 20 20" fill="none" stroke="#fff" strokeWidth="1.500">
              <circle cx="10" cy="10" r="8.500" />
              <path d="m15 15 3 3.500" />
            </svg>
          </SearchButton>
        </SearchRow>
        <Browser>
          <SideNav>
            {navGroups.map((group) => (
              <NavGroup key={group.title} $color={group.color} $gap={group.gap}>
                <legend>{group.title}</legend>
                {group.items.map(([icon, label, active]) => (
                  <NavButton type="button" key={icon} $active={active}>
                    <NavIcon name={icon} />
                    {label}
                  </NavButton>
                ))}
              </NavGroup>
            ))}
            <NavButton type="button">
              <NavIcon name="star" />
              Favorites
            </NavButton>
          </SideNav>
          <Tree>
            {treeRows.map(([kind, level, label, active]) => (
              <TreeRow key={label + level} $folder={kind === 'dir'} $active={active} $indent={level * 20 + (kind === 'dir' ? 0 : 2)}>
                {kind === 'dir' ? <FoldIcon /> : <FileIcon pdf={kind === 'pdf'} />}
                {label}
              </TreeRow>
            ))}
          </Tree>
          <ThumbTrack>
            <div />
          </ThumbTrack>
          <ScrollTrack>
            <svg width="10" height="8" viewBox="0 0 10 8" fill="none" stroke="#555">
              <path d="m1 6 4-4 4 4" />
            </svg>
            <div />
          </ScrollTrack>
        </Browser>
      </LeftPanel>
      <Gutter $side="right" $tint="#f9fffa" $shift={16}>
        <Handle label="Collapse list" />
      </Gutter>
      <Workspace>
        <TabRow>
          <Tab type="button">
            <svg width="18" height="18" viewBox="0 0 18 18" fill="none" stroke="#111" strokeWidth="1.600">
              <path d="M.5 9.500 9 1.500l8.500 8M3 8v9h12V8M7 17v-5h4v5" />
            </svg>
            Member Center
          </Tab>
          <Tab type="button" $active>Reno8 Pro-2AA298 PCB layer.pcb</Tab>
          <CloseAll type="button" aria-label="Close all tabs">
            <svg width="22" height="18" viewBox="0 0 22 18">
              <path d="M3 15V1.500h15" fill="none" stroke="#777" strokeWidth="2" />
              <rect x="6" y="4" width="14" height="14" rx="2" fill="#808080" />
              <path d="m10 8 6 6M16 8l-6 6" stroke="#fff" strokeWidth="1.500" />
            </svg>
          </CloseAll>
        </TabRow>
        <ViewRow>
          <ViewColumn>
            <ToolBar>
              {tools.map((tool, index) =>
                tool === '|' ? (
                  <ToolDivider key={index} />
                ) : (
                  <ToolButton type="button" key={tool} aria-label={tool} $on={activeTools.includes(tool)}>
                    {tool === '3D' ? '3D' : <ToolIcon name={tool} />}
                  </ToolButton>
                )
              )}
              <SchemeButton type="button">[ColorScheme]</SchemeButton>
              <ToolDivider />
              <ToolButton type="button" aria-label="Show">
                <ToolIcon name="eye" />
              </ToolButton>
              <RightTool>
                <svg width="22" height="20" viewBox="0 0 22 20" fill="none" stroke="#777">
                  <rect x="1" y="2" width="20" height="16" strokeWidth="2" />
                  <path d="M7.500 2v16" strokeWidth="1.500" />
                  <path d="M11 6.500h7M12 9.500h6M11 12.500h7M12 15h6" />
                </svg>
              </RightTool>
            </ToolBar>
            <Canvas>
              <BoardView />
              <LayerPanel>
                {layerNames.map((name) => (
                  <LayerButton type="button" key={name} $wide={name === 'ALL'} $fill={layerFills[name] || '#505050'}>{name}</LayerButton>
                ))}
              </LayerPanel>
            </Canvas>
          </ViewColumn>
          <Gutter $side="left" $tint="#fafafa" $shift={30}>
            <RightHandle label="Expand details" />
          </Gutter>
        </ViewRow>
      </Workspace>
    </Main>
    <Footer>XZZ Schematics https://www.xzztools.com</Footer>
  </AppWindow>
);

export default App;
